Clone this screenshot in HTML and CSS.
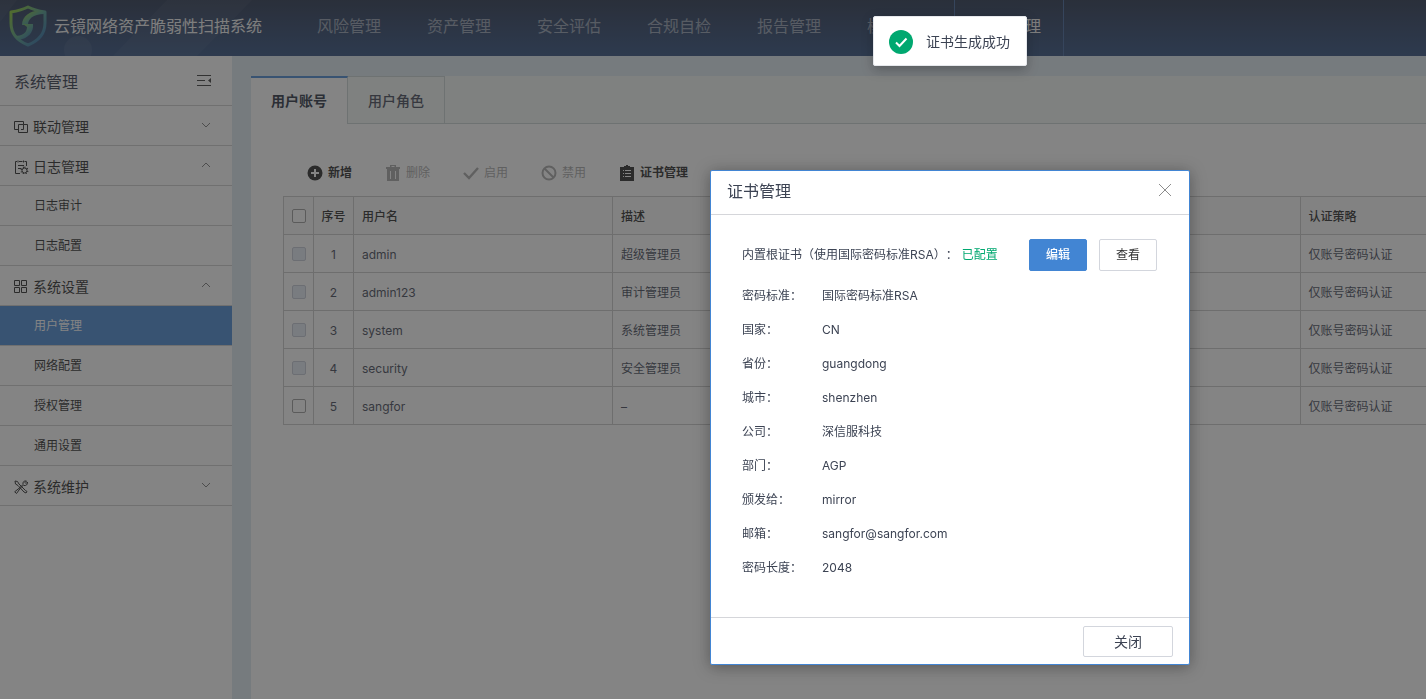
FILE: index.html
```html
<!DOCTYPE html>
<html lang="zh-CN">
<head>
<meta charset="utf-8">
<title>云镜网络资产脆弱性扫描系统</title>
<link rel="stylesheet" href="styles.css">
</head>
<body>
<div class="app">
  <header class="topbar">
    <svg class="topbar-art" width="300" height="56" viewBox="0 0 300 56" aria-hidden="true">
      <path d="M167 0H252L197 56H113Z M0 0H17L0 22Z" fill="#fff" fill-opacity=".04"/>
      <circle cx="78" cy="50" r="14" fill="#fff" fill-opacity=".06"/>
    </svg>
    <div class="brand">
      <svg class="brand-logo" width="38" height="42" viewBox="0 0 38 42" aria-hidden="true">
        <defs><linearGradient id="shield" x1="0" y1="0" x2="1" y2="1"><stop offset="0" stop-color="#86c81e"/><stop offset=".5" stop-color="#4a9a84"/><stop offset="1" stop-color="#1c5cb0"/></linearGradient></defs>
        <path fill="none" stroke="url(#shield)" stroke-width="3" stroke-linejoin="round" d="M19 2C13 5 8 6 2 7V18C2 29 9 36 19 40C29 36 36 29 36 18V7C30 6 25 5 19 2Z"/>
        <path fill="url(#shield)" d="M35 6C24 4 13 10 13 20L19 20C19 14 24 9 35 9Z"/>
        <path fill="url(#shield)" d="M14 19H24C25 27 19 34 9 35L6 31C13 31 18 28 18 22Z"/>
      </svg>
      <span class="brand-name">云镜网络资产脆弱性扫描系统</span>
    </div>
    <nav class="mainnav">
      <a href="#">风险管理</a>
      <a href="#">资产管理</a>
      <a href="#">安全评估</a>
      <a href="#">合规自检</a>
      <a href="#">报告管理</a>
      <a href="#">模板管理</a>
      <a href="#" class="is-current">系统管理</a>
    </nav>
  </header>

  <div class="layout">
    <aside class="sidebar">
      <div class="side-head">
        <span>系统管理</span>
        <button class="collapse" aria-label="收起菜单">
          <svg width="16" height="14" viewBox="0 0 16 14" fill="none" stroke="#333" stroke-width="1"><path d="M1 1.500H15M1 6.500H9M1 11.500H15"/><path d="M15 4V9L12 6.500Z" fill="#333" stroke="none"/></svg>
        </button>
      </div>
      <button class="group">
        <svg width="15" height="14" viewBox="0 0 15 14" fill="none" stroke="#222"><path d="M4.500 9.500H.5V1.500H9.500V4.500H13.500V12.500H4.500V4.500H9.500V9.500H7"/></svg>
        <span>联动管理</span>
        <svg class="chev" width="10" height="6" viewBox="0 0 10 6"><path d="M1 1L5 5L9 1"/></svg>
      </button>
      <button class="group">
        <svg width="15" height="14" viewBox="0 0 15 14" fill="none" stroke="#222"><path d="M6 13.500H1.500V1.500H3M5 1.500H8.500M10.500 1.500H12.500V6M4 .5V2.500M9.500 .5V2.500M4 5.500H10M4 8.500H7"/><circle cx="10.500" cy="10.500" r="2.500"/><path stroke-width="1.500" stroke-dasharray="1 1.600" d="M10.500 7.200A3.300 3.300 0 1 1 10.400 7.200"/></svg>
        <span>日志管理</span>
        <svg class="chev" width="10" height="6" viewBox="0 0 10 6"><path d="M1 5L5 1L9 5"/></svg>
      </button>
      <a class="item" href="#">日志审计</a>
      <a class="item" href="#">日志配置</a>
      <button class="group">
        <svg width="15" height="14" viewBox="0 0 15 14" fill="none" stroke="#222"><path d="M.5 .5H5.500V5.500H.5ZM7.500 .5H12.500V5.500H7.500ZM.5 7.500H5.500V12.500H.5ZM7.500 7.500H12.500V12.500H7.500Z"/></svg>
        <span>系统设置</span>
        <svg class="chev" width="10" height="6" viewBox="0 0 10 6"><path d="M1 5L5 1L9 5"/></svg>
      </button>
      <a class="item is-active" href="#">用户管理</a>
      <a class="item" href="#">网络配置</a>
      <a class="item" href="#">授权管理</a>
      <a class="item" href="#">通用设置</a>
      <button class="group">
        <svg width="15" height="14" viewBox="0 0 15 14" fill="none" stroke="#222" stroke-linejoin="round"><path d="M1 1L3.500 1.500L5 4L11.500 10.500L13 11.500L12 13L10 12L4 5.500L1.500 4Z M9 5.500L6.500 8L2.500 13.500L.7 11.800L6 7.500L9 4.500C8.500 2 10 .5 12.500 1L11 2.500L12 3.500L13.500 2C14 4.500 12 6 9.500 5.500"/></svg>
        <span>系统维护</span>
        <svg class="chev" width="10" height="6" viewBox="0 0 10 6"><path d="M1 1L5 5L9 1"/></svg>
      </button>
    </aside>

    <main class="panel">
      <div class="tabs" role="tablist">
        <button class="tab is-active" role="tab" aria-selected="true">用户账号</button>
        <button class="tab" role="tab" aria-selected="false">用户角色</button>
      </div>
      <div class="content">
        <div class="toolbar">
          <button class="tool">
            <svg width="16" height="16" viewBox="0 0 16 16"><circle cx="8" cy="8" r="7.500" fill="currentColor"/><path d="M8 4V12M4 8H12" stroke="#fff" stroke-width="2"/></svg>新增</button>
          <button class="tool" disabled>
            <svg width="16" height="16" viewBox="0 0 16 16"><path fill="currentColor" fill-rule="evenodd" d="M5 0H11V2H15V4H1V2H5ZM6.500 1V2H9.500V1ZM2 4H14V16H2ZM5 6V14H6V6ZM10 6V14H11V6Z"/></svg>删除</button>
          <button class="tool" disabled>
            <svg width="16" height="16" viewBox="0 0 16 16"><path d="M1 8L6 13L15 3" fill="none" stroke="currentColor" stroke-width="2.400"/></svg>启用</button>
          <button class="tool" disabled>
            <svg width="16" height="16" viewBox="0 0 16 16" fill="none" stroke="currentColor" stroke-width="2"><circle cx="8" cy="8" r="6.500"/><path d="M3.500 3.500L12.500 12.500"/></svg>禁用</button>
          <button class="tool">
            <svg width="16" height="16" viewBox="0 0 16 16"><path fill="currentColor" d="M1 2H5V1H7V0H9V1H11V2H15V16H1Z"/><path d="M4 5.500H5M6 5.500H12M4 8.500H5M6 8.500H12M4 11.500H5M6 11.500H12" stroke="#fff"/></svg>证书管理</button>
        </div>
        <table class="users">
          <colgroup><col class="c-check"><col class="c-no"><col class="c-name"><col><col class="c-auth"></colgroup>
          <thead>
            <tr><th class="check"><input type="checkbox" aria-label="全选"></th><th class="num">序号</th><th>用户名</th><th>描述</th><th>认证策略</th></tr>
          </thead>
          <tbody>
            <tr><td class="check"><input type="checkbox" aria-label="admin" disabled></td><td class="num">1</td><td>admin</td><td>超级管理员</td><td>仅账号密码认证</td></tr>
            <tr><td class="check"><input type="checkbox" aria-label="admin123" disabled></td><td class="num">2</td><td>admin123</td><td>审计管理员</td><td>仅账号密码认证</td></tr>
            <tr><td class="check"><input type="checkbox" aria-label="system" disabled></td><td class="num">3</td><td>system</td><td>系统管理员</td><td>仅账号密码认证</td></tr>
            <tr><td class="check"><input type="checkbox" aria-label="security" disabled></td><td class="num">4</td><td>security</td><td>安全管理员</td><td>仅账号密码认证</td></tr>
            <tr><td class="check"><input type="checkbox" aria-label="sangfor"></td><td class="num">5</td><td>sangfor</td><td>–</td><td>仅账号密码认证</td></tr>
          </tbody>
        </table>
      </div>
    </main>
  </div>
</div>

<div class="mask"></div>

<section class="dialog" role="dialog" aria-labelledby="dialog-title">
  <div class="dialog-head">
    <h2 id="dialog-title">证书管理</h2>
    <button class="dialog-x" aria-label="关闭对话框">
      <svg width="14" height="14" viewBox="0 0 14 14"><path d="M1 1L13 13M13 1L1 13" stroke="#8c8c8c" fill="none"/></svg>
    </button>
  </div>
  <div class="dialog-body">
    <div class="cert">
      <span>内置根证书（使用国际密码标准RSA）：</span>
      <span class="ok">已配置</span>
      <div class="cert-actions">
        <button class="btn primary">编辑</button>
        <button class="btn">查看</button>
      </div>
    </div>
    <dl class="info">
      <dt>密码标准：</dt><dd>国际密码标准RSA</dd>
      <dt>国家：</dt><dd>CN</dd>
      <dt>省份：</dt><dd>guangdong</dd>
      <dt>城市：</dt><dd>shenzhen</dd>
      <dt>公司：</dt><dd>深信服科技</dd>
      <dt>部门：</dt><dd>AGP</dd>
      <dt>颁发给：</dt><dd>mirror</dd>
      <dt>邮箱：</dt><dd>sangfor@sangfor.com</dd>
      <dt>密码长度：</dt><dd>2048</dd>
    </dl>
  </div>
  <div class="dialog-foot"><button class="btn wide">关闭</button></div>
</section>

<div class="toast" role="status">
  <svg width="24" height="24" viewBox="0 0 24 24" aria-hidden="true"><circle cx="12" cy="12" r="12" fill="#00a870"/><path d="M7 12.500L10.500 16L17.500 8.500" fill="none" stroke="#fff" stroke-width="2"/></svg>
  <span>证书生成成功</span>
</div>
</body>
</html>
```

FILE: styles.css
```css
* { box-sizing: border-box; }

body {
  margin: 0;
  overflow: hidden;
  font: 12px/20px Inter, "Noto Sans CJK SC", sans-serif;
  color: #3c4353;
  background: #dde8f0;
}

button {
  margin: 0;
  padding: 0;
  border: 0;
  background: none;
  font: inherit;
  color: inherit;
}

a { color: inherit; text-decoration: none; }

.app {
  display: flex;
  flex-direction: column;
  min-height: 100vh;
}

/* top bar */
.topbar {
  position: relative;
  display: flex;
  height: 56px;
  background: linear-gradient(#1f2c48, #28487a);
  font-size: 16px;
  line-height: 24px;
}
.topbar-art { position: absolute; left: 0; top: 0; }
.brand {
  position: relative;
  display: flex;
  align-items: center;
  gap: 7px;
  width: 294px;
  padding: 0 0 4px 9px;
  color: #f0f0f0;
}
.mainnav { position: relative; display: flex; color: rgba(255, 255, 255, .5); }
.mainnav a { width: 110px; padding: 14px 0; text-align: center; }
.mainnav .is-current {
  border: solid #3d629c;
  border-width: 0 1px;
  color: #f0f0f0;
}

/* side menu */
.layout { display: flex; flex: 1; }
.sidebar {
  flex: none;
  width: 232px;
  margin-right: 19px;
  background: #fff;
  color: #222;
}
.side-head, .group, .item {
  display: flex;
  align-items: center;
  width: 100%;
  height: 40px;
  border-bottom: 1px solid #cdcdcd;
}
.side-head {
  justify-content: space-between;
  height: 50px;
  padding: 2px 20px 0 14px;
  font-size: 16px;
  color: #2c3346;
}
.collapse { display: flex; padding-bottom: 2px; }
.group { gap: 4px; padding: 2px 21px 0 14px; font-size: 14px; }
.chev { margin: 0 0 4px auto; fill: none; stroke: #777; }
.item { padding-left: 34px; }
.item.is-active { background: #4285d3; color: #fff; }

/* main panel */
.panel { flex: 1; min-width: 0; margin-top: 20px; background: #fff; }
.tabs {
  display: flex;
  height: 48px;
  background: #f2f7f4;
  box-shadow: inset 0 -1px #c9d2d2;
}
.tab {
  padding: 2px 20px 0;
  border: solid #c9d2d2;
  border-width: 1px 1px 1px 0;
  font-size: 14px;
  font-weight: 500;
}
.tab.is-active {
  padding-top: 0;
  border-top: 2px solid #4285d3;
  border-bottom: 0;
  background: #fff;
  color: #222a3a;
  font-weight: 700;
}
.content { padding: 39px 0 0 32px; }
.toolbar { display: flex; gap: 33px; padding: 0 24px 13px; }
.tool {
  display: flex;
  align-items: center;
  gap: 5px;
  color: #222;
  font-weight: 700;
}
.tool:disabled { color: #a5a5a5; font-weight: 400; }

.users {
  width: 100%;
  border-collapse: collapse;
  table-layout: fixed;
}
.c-check { width: 30px; }
.c-no { width: 40px; }
.c-name { width: 259px; }
.c-auth { width: 126px; }
.users th, .users td {
  height: 38px;
  padding: 2px 8px 0;
  border: 1px solid #c8c8c8;
  border-right: 0;
  text-align: left;
}
.users th { background: #fafafa; color: #222; font-weight: 500; }
.users .check { padding-top: 0; }
.users .num { padding: 2px 0 0; text-align: center; }
.users input {
  display: block;
  width: 14px;
  height: 14px;
  margin: 0;
  appearance: none;
  border: 1px solid #999;
  border-radius: 2px;
  background: #fff;
}
.users input:disabled { border-color: #c3c9d4; background: #e3eaf6; }

/* overlay layer */
.mask { position: fixed; inset: 0; background: rgba(50, 50, 50, .6); }

.dialog {
  position: fixed;
  left: 710px;
  top: 170px;
  width: 480px;
  border: 1px solid #4285d3;
  border-radius: 2px;
  background: #fff;
  box-shadow: 0 2px 16px rgba(0, 0, 0, .35);
}
.dialog-head {
  display: flex;
  justify-content: space-between;
  align-items: center;
  height: 44px;
  padding: 0 17px 4px 16px;
  border-bottom: 1px solid #d5d6da;
}
.dialog-head h2 { margin: 0; font-size: 16px; font-weight: 400; }
.dialog-x { display: flex; padding-bottom: 2px; }
.dialog-body { padding: 24px 32px 32px 31px; }
.cert {
  display: flex;
  align-items: center;
  gap: 4px;
  margin-bottom: 8px;
  text-spacing-trim: space-all;
}
.ok { color: #00a870; }
.cert-actions { display: flex; gap: 12px; margin-left: auto; }
.btn {
  width: 58px;
  height: 32px;
  border: 1px solid #d3d6dd;
  border-radius: 2px;
  background: #fff;
  color: #333;
}
.btn.primary { border-color: #4285d3; background: #4285d3; color: #fff; font-weight: 500; }
.info {
  display: grid;
  grid-template-columns: 80px 1fr;
  margin: 0;
  line-height: 34px;
}
.info dd { margin: 0; }
.dialog-foot {
  display: flex;
  justify-content: flex-end;
  padding: 8px 16px 7px;
  border-top: 1px solid #d5d6da;
}
.btn.wide { width: 90px; height: 31px; font-size: 14px; color: #3c4353; }

.toast {
  position: fixed;
  left: 873px;
  top: 16px;
  display: flex;
  align-items: center;
  gap: 13px;
  height: 50px;
  padding: 1px 16px 0 15px;
  border: 1px solid #e6e8ec;
  border-radius: 2px;
  background: #fff;
  box-shadow: 0 4px 12px rgba(0, 0, 0, .25);
  font-size: 14px;
}
```
